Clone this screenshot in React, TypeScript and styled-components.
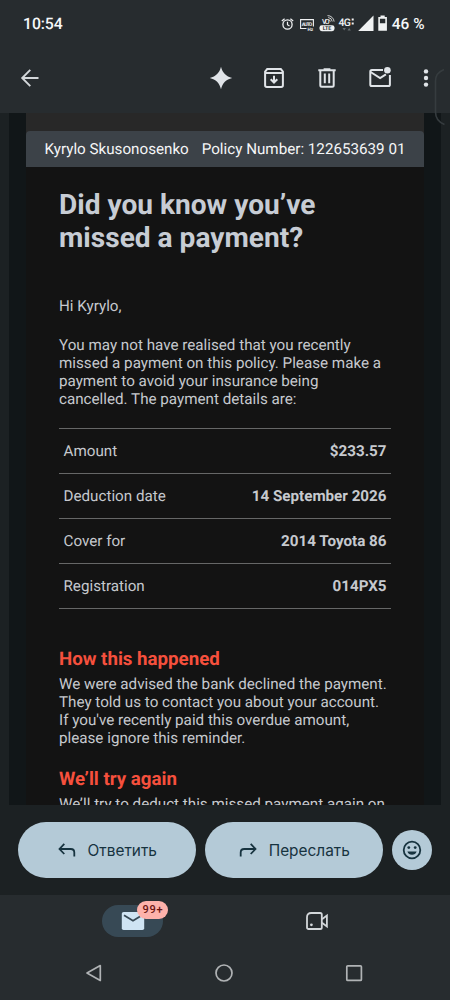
import React from "react";
import styled, { createGlobalStyle } from "styled-components";

const Global = createGlobalStyle`
  *, *::before, *::after { box-sizing: border-box; }
  html, body { margin: 0; padding: 0; background: #1c2123; }
  body {
    font-family: Roboto, "Liberation Sans", sans-serif;
    text-rendering: geometricPrecision;
  }
  p, h1, h2, dl, dt, dd { margin: 0; }
  button { border: 0; padding: 0; background: none; font: inherit; color: inherit; }
  svg { display: block; flex: none; overflow: visible; }
`;

const Screen = styled.div`
  position: relative;
  width: 450px;
  height: 1000px;
  display: flex;
  flex-direction: column;
  overflow: hidden;
  background: #1c2123;
`;

const Header = styled.header`
  height: 113px;
  flex: none;
  background: #272c2f;
`;

const StatusBar = styled.div`
  height: 48px;
  padding: 0 25.5px 0 23px;
  display: flex;
  align-items: center;
  justify-content: space-between;
  color: #f6f8f9;
`;

const Clock = styled.time`
  font-size: 15.8px;
  font-weight: 500;
  line-height: 20px;
  letter-spacing: -0.1px;
`;

const Indicators = styled.div`
  display: flex;
  align-items: center;
`;

const Percent = styled.span`
  margin-left: -1px;
  font-size: 15.4px;
  font-weight: 500;
  line-height: 20px;
`;

const Toolbar = styled.div`
  height: 60px;
  padding: 0 21px 0 18px;
  display: flex;
  align-items: center;
  justify-content: space-between;
  color: #e0e4e8;
`;

const Actions = styled.div`
  display: flex;
  align-items: center;
  gap: 25px;
`;

const IconButton = styled.button<{ $width?: number; $gap?: number }>`
  width: ${(p) => p.$width ?? 28}px;
  height: 28px;
  margin-left: ${(p) => p.$gap ?? 0}px;
  display: flex;
  align-items: center;
  justify-content: center;
`;

const EdgeHandle = styled.div`
  position: absolute;
  left: 434px;
  top: 68px;
  width: 16px;
  height: 58px;
  overflow: hidden;
  pointer-events: none;
`;

const MailView = styled.main`
  height: 692px;
  flex: none;
  margin: 0 9px;
  padding: 0 17px;
  overflow: hidden;
  background: #111618;
`;

const Message = styled.article`
  height: 720px;
  background: #131313;
`;

const Lead = styled.div`
  height: 36px;
  margin-bottom: -18px;
  background: #282828;
`;

const PolicyBanner = styled.div`
  position: relative;
  height: 36px;
  padding: 0 18.5px;
  display: flex;
  align-items: center;
  justify-content: space-between;
  border-radius: 4px 4px 0 0;
  background: #3c4248;
  color: #f5f6f7;
  font-size: 15.2px;
  white-space: nowrap;
`;

const Body = styled.div`
  padding: 21px 33px 0;
  color: #c6c9ce;
`;

const Title = styled.h1`
  color: #c7ccd4;
  font-size: 28.1px;
  font-weight: 700;
  line-height: 33px;
  white-space: nowrap;
`;

const Paragraph = styled.p<{ $top: number }>`
  margin-top: ${(p) => p.$top}px;
  font-size: 15.2px;
  line-height: 18px;
  white-space: nowrap;
`;

const Details = styled.dl`
  margin-top: 20px;
  border-top: 1px solid #666767;
`;

const DetailRow = styled.div`
  height: 45px;
  padding: 0 4.5px;
  display: flex;
  align-items: center;
  justify-content: space-between;
  border-bottom: 1px solid #666767;
  font-size: 15.2px;
`;

const DetailValue = styled.dd`
  font-weight: 700;
`;

const SectionTitle = styled.h2<{ $top: number }>`
  margin-top: ${(p) => p.$top}px;
  color: #f6503d;
  font-size: 18.7px;
  font-weight: 700;
  line-height: 22px;
  white-space: nowrap;
`;

const ReplyBar = styled.div`
  height: 90px;
  flex: none;
  padding: 0 18px;
  display: flex;
  align-items: center;
  gap: 9px;
  color: #17333f;
`;

const ReplyButton = styled.button`
  width: 178px;
  height: 56px;
  display: flex;
  align-items: center;
  justify-content: center;
  gap: 10.5px;
  border-radius: 28px;
  background: #b4cad7;
  color: #17333f;
  font-family: Inter, Roboto, sans-serif;
  font-size: 15.4px;
  font-weight: 400;
`;

const EmojiButton = styled.button`
  width: 40px;
  height: 40px;
  display: flex;
  align-items: center;
  justify-content: center;
  border-radius: 50%;
  background: #b4cad7;
`;

const Footer = styled.footer`
  flex: 1;
  background: #272c2f;
`;

const Tabs = styled.nav`
  height: 52px;
  padding: 0 103px 0 102px;
  display: flex;
  align-items: center;
  justify-content: space-between;
`;

const Tab = styled.button<{ $active?: boolean }>`
  position: relative;
  width: 61px;
  height: 32px;
  display: flex;
  align-items: center;
  justify-content: center;
  border-radius: 16px;
  background: ${(p) => (p.$active ? "#374955" : "transparent")};
`;

const Badge = styled.span`
  position: absolute;
  left: 35px;
  top: -4px;
  width: 31px;
  height: 18px;
  padding-left: 1px;
  border-radius: 9px;
  background: #feb2ab;
  color: #6b1512;
  font-size: 11px;
  font-weight: 500;
  line-height: 18px;
  letter-spacing: 0.8px;
  text-align: center;
`;

const SystemNav = styled.div`
  height: 51px;
  padding: 0 80.5px 0 78px;
  display: flex;
  align-items: center;
  justify-content: space-between;
`;

const StatusIcons = () => (
  <svg width="112" height="24" viewBox="0 0 112 24" fill="none" stroke="#f0f2f3">
    <circle cx="6.5" cy="12.5" r="4.6" strokeWidth="1.3" />
    <path d="M6.500 9.700v3l2 1.300M.8 9 3.600 6.700M12.200 9 9.400 6.700" strokeWidth="1.2" />
    <path d="M25.500 16.500H19.600V7.600h12.800v7" strokeWidth="1.1" />
    <g fill="#f0f2f3" stroke="none" fontFamily="Roboto, sans-serif" fontWeight="700">
      <text x="20.8" y="14" fontSize="5" textLength="10.5">AUTO</text>
      <text x="26.6" y="18.6" fontSize="4.6">Hz</text>
      <text x="41" y="12.4" fontSize="7" fontWeight="500" textLength="7.5">VO</text>
      <rect x="38.5" y="13.2" width="15" height="6" rx="2.4" />
      <text x="57.6" y="13.6" fontSize="10.5" fontWeight="500" textLength="12.4">4G</text>
      <text x="41.8" y="18.2" fontSize="5.4" fill="#272c2f" textLength="8.6">LTE</text>
      <rect x="70.7" y="6.5" width="2" height="2" />
      <rect x="70.7" y="10.5" width="2" height="2" />
      <path d="M77.200 19 92.500 3.500V19Z" />
      <path d="M61.500 16h3.400l-1.700 2.400ZM66.500 18.400h3.400L68.200 16Z" fill="#646a6d" />
    </g>
    <path d="M47.200 5.500a4.500 4.500 0 0 1 4 4M46.500 3.600a6.500 6.500 0 0 1 6.600 6M47.400 7.600a2.500 2.500 0 0 1 2 2" strokeWidth=".8" />
    <path d="M98.100 5.900h7v12h-7z" strokeWidth="1.6" />
    <path d="M99.500 3.500h4.200v2h-4.200zM98 11.200h7.200v6.800H98z" fill="#f0f2f3" stroke="none" />
  </svg>
);

const BackIcon = () => (
  <svg width="24" height="24" viewBox="0 0 24 24" fill="none" stroke="#d3d7da" strokeWidth="1.9">
    <path d="M20.500 12H4.200M12.300 3.900 4.200 12l8.100 8.100" />
  </svg>
);

const SparkIcon = () => (
  <svg width="24" height="24" viewBox="0 0 24 24" fill="currentColor">
    <path d="M12 .8C13.600 7 17 10.400 23.200 12 17 13.600 13.600 17 12 23.200 10.400 17 7 13.600.8 12 7 10.400 10.400 7 12 .8Z" />
  </svg>
);

const ArchiveIcon = () => (
  <svg width="24" height="24" viewBox="0 0 24 24" fill="none" stroke="currentColor" strokeWidth="2">
    <path d="M3.100 5.700 5.200 3.100h13.600l2.100 2.600v13.500q0 1.700-1.700 1.700H4.800q-1.700 0-1.700-1.700ZM3.100 7h17.800" />
    <path d="M12 9.700v6.500M8.700 13.200l3.300 3.300 3.300-3.300" />
  </svg>
);

const TrashIcon = () => (
  <svg width="24" height="24" viewBox="0 0 24 24" fill="none" stroke="currentColor" strokeWidth="2">
    <path d="M3.300 4.200h17.400M8.600 3.200h6.800" />
    <path d="M5.300 4.600v14.600q0 1.500 1.500 1.500h10.400q1.500 0 1.500-1.500V4.600M9.800 7.600v9.600M14.200 7.600v9.600" />
  </svg>
);

const UnreadIcon = () => (
  <svg width="24" height="24" viewBox="0 0 24 24" fill="none" stroke="currentColor" strokeWidth="2">
    <path d="M15 4.100H3.900q-1.600 0-1.600 1.600v12.800q0 1.600 1.600 1.600h16.400q1.600 0 1.600-1.600V9" />
    <path d="m2.600 6 9.500 6 5.800-3.700" />
    <circle cx="19.4" cy="4.3" r="3.3" fill="currentColor" stroke="none" />
  </svg>
);

const MoreIcon = () => (
  <svg width="6" height="20" viewBox="0 0 6 20" fill="currentColor">
    <circle cx="3" cy="3.4" r="2.2" />
    <circle cx="3" cy="10" r="2.2" />
    <circle cx="3" cy="16.6" r="2.2" />
  </svg>
);

const ReplyIcon = ({ forward = false }: { forward?: boolean }) => (
  <svg width="20" height="20" viewBox="0 0 20 20" fill="none" stroke="currentColor" strokeWidth="1.8">
    <g transform={forward ? "translate(20 0) scale(-1 1)" : undefined}>
      <path d="M2.600 9h11.200q3.500 0 3.500 3.500v4M7.300 3.800 2.500 9l4.800 5" />
    </g>
  </svg>
);

const SmileIcon = () => (
  <svg width="20" height="20" viewBox="0 0 20 20" fill="none" stroke="#17333f" strokeWidth="1.8">
    <circle cx="10" cy="10" r="8.3" />
    <g fill="#17333f" stroke="none">
      <circle cx="6.8" cy="7.6" r="1.4" />
      <circle cx="13.2" cy="7.6" r="1.4" />
      <path d="M5.400 11.600h9.200Q13.500 14.800 10 14.800T5.400 11.600Z" />
    </g>
  </svg>
);

const MailIcon = () => (
  <svg width="24" height="20" viewBox="0 0 24 20">
    <rect x=".8" y="1" width="22.4" height="18" rx="1.8" fill="#cfe4f3" />
    <path d="m3 4.200 9 5.600 9-5.600" fill="none" stroke="#374955" strokeWidth="1.8" />
  </svg>
);

const VideoIcon = () => (
  <svg width="24" height="20" viewBox="0 0 24 20" fill="none" stroke="#d3d7da" strokeWidth="1.8">
    <path d="M6.200 2h9q1.600 0 1.600 1.600v12.800q0 1.600-1.600 1.600H3.600Q2 18 2 16.400V6.200Q2 2 6.200 2Z" />
    <path d="m17 8.200 4.900-3.600v10.800L17 11.800" />
    <circle cx="6.4" cy="13.8" r="1.4" fill="#d3d7da" stroke="none" />
  </svg>
);

const details = [
  ["Amount", "$233.57"],
  ["Deduction date", "14 September 2026"],
  ["Cover for", "2014 Toyota 86"],
  ["Registration", "014PX5"],
];

export default function App() {
  return (
    <Screen>
      <Global />
      <Header>
        <StatusBar>
          <Clock>10:54</Clock>
          <Indicators>
            <StatusIcons />
            <Percent>46 %</Percent>
          </Indicators>
        </StatusBar>
        <Toolbar>
          <IconButton $width={24} aria-label="Back"><BackIcon /></IconButton>
          <Actions>
            <IconButton aria-label="Summarise"><SparkIcon /></IconButton>
            <IconButton aria-label="Archive"><ArchiveIcon /></IconButton>
            <IconButton aria-label="Delete"><TrashIcon /></IconButton>
            <IconButton aria-label="Mark unread"><UnreadIcon /></IconButton>
            <IconButton $width={6} $gap={4} aria-label="More"><MoreIcon /></IconButton>
          </Actions>
        </Toolbar>
      </Header>
      <MailView>
        <Message>
          <Lead />
          <PolicyBanner>
            <span>Kyrylo Skusonosenko</span>
            <span>Policy Number: 122653639 01</span>
          </PolicyBanner>
          <Body>
            <Title>Did you know you’ve<br />missed a payment?</Title>
            <Paragraph $top={43}>Hi Kyrylo,</Paragraph>
            <Paragraph $top={21}>
              You may not have realised that you recently<br />
              missed a payment on this policy. Please make a<br />
              payment to avoid your insurance being<br />
              cancelled. The payment details are:
            </Paragraph>
            <Details>
              {details.map(([label, value]) => (
                <DetailRow key={label}>
                  <dt>{label}</dt>
                  <DetailValue>{value}</DetailValue>
                </DetailRow>
              ))}
            </Details>
            <SectionTitle $top={39}>How this happened</SectionTitle>
            <Paragraph $top={5}>
              We were advised the bank declined the payment.<br />
              They told us to contact you about your account.<br />
              If you've recently paid this overdue amount,<br />
              please ignore this reminder.
            </Paragraph>
            <SectionTitle $top={21}>We’ll try again</SectionTitle>
            <Paragraph $top={5}>We’ll try to deduct this missed payment again on</Paragraph>
          </Body>
        </Message>
      </MailView>
      <ReplyBar>
        <ReplyButton><ReplyIcon />Ответить</ReplyButton>
        <ReplyButton><ReplyIcon forward />Переслать</ReplyButton>
        <EmojiButton aria-label="React"><SmileIcon /></EmojiButton>
      </ReplyBar>
      <Footer>
        <Tabs>
          <Tab $active aria-label="Mail"><MailIcon /><Badge>99+</Badge></Tab>
          <Tab aria-label="Meet"><VideoIcon /></Tab>
        </Tabs>
        <SystemNav>
          <svg width="32" height="20" viewBox="0 0 32 20" fill="none" stroke="#b0b3b5" strokeWidth="1.7" strokeLinejoin="round">
            <path d="M22.300 2.600v14.800L9 10Z" />
          </svg>
          <svg width="20" height="20" viewBox="0 0 20 20" fill="none" stroke="#b0b3b5" strokeWidth="1.7">
            <circle cx="10" cy="10" r="8" />
          </svg>
          <svg width="32" height="20" viewBox="0 0 32 20" fill="none" stroke="#b0b3b5" strokeWidth="1.7">
            <rect x="8.8" y="2.8" width="14.6" height="14.6" rx="1" />
          </svg>
        </SystemNav>
      </Footer>
      <EdgeHandle>
        <svg width="16" height="58" viewBox="0 0 16 58" fill="none" stroke="#363c3f" strokeWidth="1.6">
          <path d="M10 1.500Q1.500 5 1.500 13v31q0 9 9 12.500" />
        </svg>
      </EdgeHandle>
    </Screen>
  );
}
